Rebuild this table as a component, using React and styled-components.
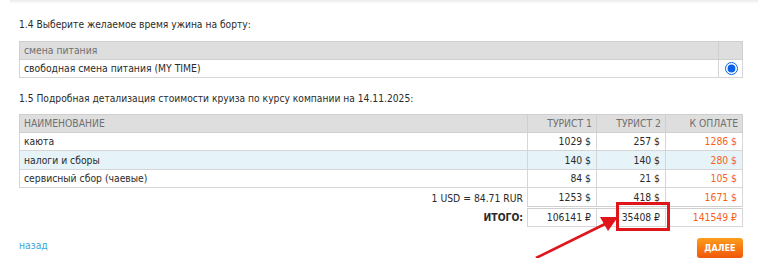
import React from "react";
import styled, { createGlobalStyle } from "styled-components";

const Global = createGlobalStyle`
  html, body {
    margin: 0;
    padding: 0;
    background: #fff;
  }
  body {
    font-family: "DejaVu Sans Condensed", "DejaVu Sans", sans-serif;
    font-size: 10.3px;
    color: #2b2b2b;
  }
`;

const rows = [
  { name: "каюта", t1: "1029 $", t2: "257 $", pay: "1286 $" },
  { name: "налоги и сборы", t1: "140 $", t2: "140 $", pay: "280 $", hl: true },
  { name: "сервисный сбор (чаевые)", t1: "84 $", t2: "21 $", pay: "105 $" },
];

const App = () => {
  return (
    <>
      <Global />
      <TopEdge />
      <Page>
        <Heading>1.4 Выберите желаемое время ужина на борту:</Heading>
        <Table>
          <tbody>
            <tr>
              <HeadCell>смена питания</HeadCell>
              <HeadCell $w={24} />
            </tr>
            <tr>
              <Cell>свободная смена питания (MY TIME)</Cell>
              <RadioCell>
                <Radio type="radio" name="meal" checked readOnly />
              </RadioCell>
            </tr>
          </tbody>
        </Table>

        <Heading $bottom={7}>
          1.5 Подробная детализация стоимости круиза по курсу компании на
          14.11.2025:
        </Heading>
        <PriceArea>
          <Table>
            <tbody>
              <tr>
                <HeadCell>НАИМЕНОВАНИЕ</HeadCell>
                <HeadCell $w={69} $right>
                  ТУРИСТ 1
                </HeadCell>
                <HeadCell $w={69} $right>
                  ТУРИСТ 2
                </HeadCell>
                <HeadCell $w={77} $right>
                  К ОПЛАТЕ
                </HeadCell>
              </tr>
              {rows.map((r) => (
                <Row key={r.name} $hl={r.hl}>
                  <Cell>{r.name}</Cell>
                  <Cell $right>{r.t1}</Cell>
                  <Cell $right>{r.t2}</Cell>
                  <Cell $right $accent>
                    {r.pay}
                  </Cell>
                </Row>
              ))}
              <tr>
                <SumLabel>1 USD = 84.71 RUR</SumLabel>
                <Cell $right>1253 $</Cell>
                <Cell $right>418 $</Cell>
                <Cell $right $accent>
                  1671 $
                </Cell>
              </tr>
              <tr>
                <SumLabel $bold>ИТОГО:</SumLabel>
                <TotalCell>106141 ₽</TotalCell>
                <TotalCell>35408 ₽</TotalCell>
                <TotalCell $accent>141549 ₽</TotalCell>
              </tr>
            </tbody>
          </Table>
          <Marker />
          <Arrow width="100" height="60" viewBox="0 0 100 60">
            <line x1="4" y1="54" x2="75" y2="19" stroke="#e0141b" strokeWidth="2.6" />
            <polygon points="86,13 68,13 76,27" fill="#e0141b" />
          </Arrow>
        </PriceArea>

        <Footer>
          <BackLink href="#">назад</BackLink>
          <NextButton type="button">Далее</NextButton>
        </Footer>
      </Page>
    </>
  );
};

export default App;

const TopEdge = styled.div`
  height: 4px;
  margin: 0 10px;
  background: linear-gradient(#ececec, #fff);
`;

const Page = styled.div`
  width: 724px;
  padding: 0 0 0 19px;
`;

const Heading = styled.p`
  margin: 13px 0 ${(p) => p.$bottom || 8}px;
  line-height: 16px;
  font-size: 10.2px;
  color: #2b2b2b;
`;

const Table = styled.table`
  width: 100%;
  border-collapse: collapse;
  table-layout: fixed;
`;

const HeadCell = styled.td`
  height: 17.5px;
  padding: 0 4px;
  background: #dedede;
  border: 1px solid #cfcfcf;
  color: #707070;
  text-align: ${(p) => (p.$right ? "right" : "left")};
  width: ${(p) => (p.$w ? `${p.$w}px` : "auto")};
  box-sizing: border-box;
  line-height: 16px;
  white-space: nowrap;
`;

const Row = styled.tr`
  background: ${(p) => (p.$hl ? "#e6f3f9" : "#fff")};
`;

const Cell = styled.td`
  height: 17.5px;
  padding: 0 ${(p) => (p.$right ? 5 : 4)}px 0 4px;
  border: 1px solid #d6d6d6;
  line-height: 16px;
  text-align: ${(p) => (p.$right ? "right" : "left")};
  color: ${(p) => (p.$accent ? "#f5621d" : "#2b2b2b")};
  white-space: nowrap;
`;

const RadioCell = styled.td`
  padding: 0;
  border: 1px solid #d6d6d6;
  text-align: center;
  vertical-align: middle;
`;

const Radio = styled.input`
  width: 13px;
  height: 13px;
  margin: 2px 0 0 1px;
  accent-color: #0b62e8;
`;

const SumLabel = styled.td`
  height: 17.5px;
  padding: 0 4px;
  border: none;
  text-align: right;
  line-height: 16px;
  color: #2b2b2b;
  font-weight: ${(p) => (p.$bold ? "bold" : "normal")};
`;

const TotalCell = styled(Cell).attrs({ $right: true })`
  border-top: 3px double #d0d0d0;
`;

const PriceArea = styled.div`
  position: relative;
`;

const Marker = styled.div`
  position: absolute;
  left: 597px;
  top: 88px;
  width: 48px;
  height: 23px;
  border: 3px solid #e0141b;
`;

const Arrow = styled.svg`
  position: absolute;
  left: 513px;
  top: 90px;
  overflow: visible;
`;

const Footer = styled.div`
  display: flex;
  justify-content: space-between;
  align-items: flex-start;
  margin-top: 11px;
`;

const BackLink = styled.a`
  color: #3aa6d6;
  text-decoration: none;
  line-height: 14px;
`;

const NextButton = styled.button`
  height: 20px;
  width: 46px;
  padding: 0;
  border: none;
  border-radius: 3px;
  background: linear-gradient(#fc9e1c, #f0570a);
  color: #fff;
  font-family: "DejaVu Sans Condensed", "DejaVu Sans", sans-serif;
  font-weight: bold;
  font-size: 9px;
  text-transform: uppercase;
  box-shadow: 0 1px 1px rgba(0, 0, 0, 0.15);
`;
